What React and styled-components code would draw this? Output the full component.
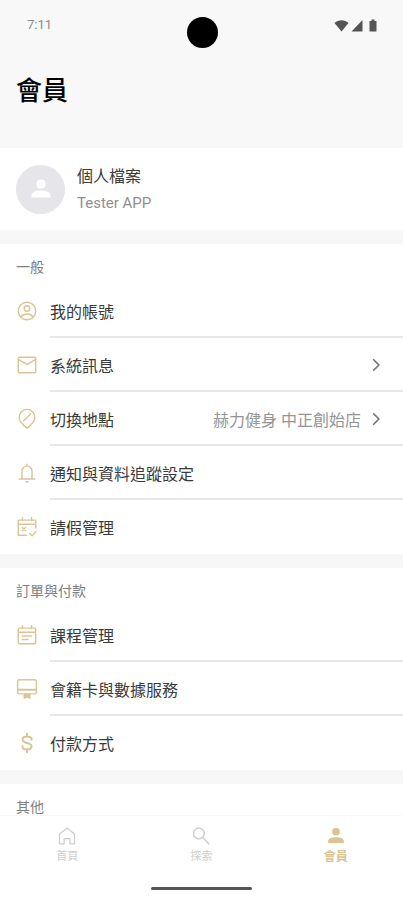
import React from "react";
import styled, { createGlobalStyle } from "styled-components";

const GOLD = "#dac595";

const GlobalStyle = createGlobalStyle`
  *, *::before, *::after { box-sizing: border-box; }
  body {
    margin: 0;
    background: #fff;
    color: #3a3a3a;
    font-family: Roboto, "Noto Sans CJK TC", sans-serif;
  }
  button { font: inherit; color: inherit; border: 0; background: none; padding: 0; margin: 0; }
`;

const Screen = styled.div`
  display: flex;
  flex-direction: column;
  height: 100vh;
  overflow: hidden;
`;

const Header = styled.header`
  flex: none;
  background: #f8f8f8;
  padding-bottom: 39px;
`;

const StatusBar = styled.div`
  display: grid;
  grid-template-columns: 1fr auto 1fr;
  align-items: start;
  padding: 17px 25px 0 27px;
`;

const Clock = styled.span`
  font-size: 13px;
  line-height: 16px;
  color: #8c8c8c;
`;

const Camera = styled.span`
  width: 31px;
  height: 31px;
  border-radius: 50%;
  background: #000;
`;

const StatusIcons = styled.div`
  display: flex;
  justify-content: flex-end;
  align-items: center;
  height: 16px;
  gap: 2px;
  color: #555;
`;

const Title = styled.h1`
  margin: 25px 16px 0;
  font-size: 26px;
  line-height: 36px;
  font-weight: 500;
  color: #000;
`;

const Content = styled.main`
  flex: 1;
  min-height: 0;
  overflow: hidden;
  display: flex;
  flex-direction: column;
  gap: 14px;
  background: #f7f7f7;
`;

const Profile = styled.button`
  flex: none;
  display: flex;
  align-items: center;
  gap: 12px;
  padding: 14px 16px;
  background: #fff;
  text-align: left;
`;

const Avatar = styled.span`
  display: grid;
  place-items: center;
  width: 49px;
  height: 49px;
  border-radius: 50%;
  background: #e5e5ea;
  color: #fff;
`;

const ProfileText = styled.span`
  display: grid;
  padding-top: 2px;
  font-size: 16px;
  line-height: 26px;
`;

const ProfileName = styled.span`
  font-size: 15px;
  color: #909090;
`;

const Section = styled.section`
  flex: none;
  background: #fff;
`;

const SectionTitle = styled.h2`
  margin: 0;
  height: 40px;
  padding: 13px 16px 0;
  font-size: 14px;
  line-height: 20px;
  font-weight: 400;
  color: #808080;
`;

const List = styled.ul`
  list-style: none;
  margin: 0;
  padding: 0;
`;

const Row = styled.button`
  display: flex;
  align-items: center;
  width: 100%;
  height: 54px;
  gap: 12px;
  padding-left: 16px;
  text-align: left;
  font-size: 16px;
`;

const RowBody = styled.span`
  display: flex;
  align-items: center;
  flex: 1;
  height: 54px;
  padding: 2px 20px 0 0;
  border-bottom: 2px solid ${(p) => (p.$divided ? "#e8e8e8" : "transparent")};
`;

const RowLabel = styled.span`
  flex: 1;
  white-space: nowrap;
`;

const RowValue = styled.span`
  margin-right: 8px;
  color: #959595;
  white-space: nowrap;
`;

const TabBar = styled.nav`
  flex: none;
  display: grid;
  grid-template-columns: repeat(3, 1fr);
  background: #fff;
  border-top: 1px solid #f9f9f9;
  padding-top: 10px;
`;

const Tab = styled.button`
  display: flex;
  flex-direction: column;
  align-items: center;
  font-size: ${(p) => (p.$active ? 12 : 11)}px;
  line-height: 18px;
  gap: 2px;
  font-weight: ${(p) => (p.$active ? 700 : 400)};
  color: ${(p) => (p.$active ? GOLD : "#cecece")};
`;

const HomeBar = styled.div`
  flex: none;
  align-self: center;
  width: 101px;
  height: 3px;
  border-radius: 2px;
  margin: 21px 0 10px;
  background: #555;
`;

const Svg = styled.svg`
  flex: none;
  display: block;
  color: ${(p) => p.$tone || "currentColor"};
`;

function Line({ size = 22, tone, width = 1.6, children }) {
  return (
    <Svg $tone={tone} width={size} height={size} viewBox="0 0 24 24" fill="none" stroke="currentColor"
      strokeWidth={width} strokeLinecap="round" strokeLinejoin="round" aria-hidden="true">
      {children}
    </Svg>
  );
}

function Person({ size }) {
  return (
    <Svg width={size} height={size} viewBox="0 0 24 24" fill="currentColor" aria-hidden="true">
      <rect x="7.5" y="2.5" width="9" height="9" rx="4" />
      <path d="M2.5 20.5v-2c0-3.400 4-5 9.500-5s9.500 1.600 9.500 5v2z" />
    </Svg>
  );
}

const ICONS = {
  account: (
    <>
      <circle cx="12" cy="12" r="9.500" />
      <circle cx="12" cy="9.200" r="3" />
      <path d="M5.500 18.500c1.500-2.200 3.800-3.200 6.500-3.200s5 1 6.500 3.200" />
    </>
  ),
  mail: (
    <>
      <rect x="2.500" y="3.500" width="19" height="17" rx="1" />
      <path d="M3.500 6.500l8.500 5.200 8.500-5.200" />
    </>
  ),
  place: (
    <>
      <path d="M12 22C7.500 18.500 3.500 14.800 3.500 10a8.500 8.500 0 0 1 17 0c0 4.800-4 8.500-8.500 12z" />
      <path d="M8.500 14l7.500-7.500" />
    </>
  ),
  bell: (
    <>
      <path d="M3.500 18.500h17M6.500 18.500V10a5.500 5.500 0 0 1 11 0v8.500M12 2.500v2" />
      <path d="M10.800 21.500h2.400" />
    </>
  ),
  leave: (
    <>
      <path d="M21.500 13V4.500h-19V21h9M3 9h18M7 2v3M17 2v3" />
      <path d="M7 12.500l3.500 3.500M10.500 12.500L7 16M15 19l2.500 2.500 4.500-4.500" />
    </>
  ),
  course: (
    <>
      <rect x="2.500" y="4.500" width="19" height="17" rx="1" />
      <path d="M3 9h18M7 2v3M17 2v3M7 13h10M7 17h6" />
    </>
  ),
  card: (
    <>
      <rect x="1.800" y="1.800" width="20.400" height="15.500" rx="1.500" />
      <path d="M2.500 12.800h19" strokeWidth="2.400" />
      <path d="M9 18v4l3-1.500 3 1.500v-4z" fill="currentColor" />
    </>
  ),
  pay: (
    <path
      d="M12 2v3M12 19v3M17 8.500c0-2-2-3.500-5-3.500S7.200 6.500 7.200 8.500c0 4.500 9.800 2.500 9.800 7 0 2-2 3.500-5 3.500s-5-1.500-5-3.500"
      strokeWidth="2.200"
    />
  ),
};

const SECTIONS = [
  {
    title: "一般",
    rows: [
      { icon: "account", label: "我的帳號" },
      { icon: "mail", label: "系統訊息", arrow: true },
      { icon: "place", label: "切換地點", value: "赫力健身 中正創始店", arrow: true },
      { icon: "bell", label: "通知與資料追蹤設定" },
      { icon: "leave", label: "請假管理" },
    ],
  },
  {
    title: "訂單與付款",
    rows: [
      { icon: "course", label: "課程管理" },
      { icon: "card", label: "會籍卡與數據服務" },
      { icon: "pay", label: "付款方式" },
    ],
  },
  { title: "其他", rows: [] },
];

function MenuSection({ title, rows }) {
  return (
    <Section>
      <SectionTitle>{title}</SectionTitle>
      <List>
        {rows.map((row, i) => (
          <li key={row.label}>
            <Row type="button">
              <Line tone={GOLD}>{ICONS[row.icon]}</Line>
              <RowBody $divided={i < rows.length - 1}>
                <RowLabel>{row.label}</RowLabel>
                {row.value && <RowValue>{row.value}</RowValue>}
                {row.arrow && (
                  <Line size={14} width={3} tone="#777">
                    <path d="M8 3l9 9-9 9" />
                  </Line>
                )}
              </RowBody>
            </Row>
          </li>
        ))}
      </List>
    </Section>
  );
}

export default function App() {
  return (
    <Screen>
      <GlobalStyle />
      <Header>
        <StatusBar>
          <Clock>7:11</Clock>
          <Camera />
          <StatusIcons>
            <Svg width="15" height="13" viewBox="0 0 15 13" fill="currentColor" aria-hidden="true">
              <path d="M0.500 4C4.500 0.200 10.500 0.200 14.500 4L7.500 12.500z" />
            </Svg>
            <Svg width="12" height="13" viewBox="0 0 12 13" fill="currentColor" aria-hidden="true">
              <path d="M0.500 12.500L11.500 1v11.500z" />
            </Svg>
            <Svg width="13" height="13" viewBox="0 0 13 13" fill="currentColor" aria-hidden="true">
              <path d="M4.500 2h2V0.500h3V2h2v10.500h-7z" />
            </Svg>
          </StatusIcons>
        </StatusBar>
        <Title>會員</Title>
      </Header>
      <Content>
        <Profile type="button">
          <Avatar>
            <Person size={24} />
          </Avatar>
          <ProfileText>
            個人檔案
            <ProfileName>Tester APP</ProfileName>
          </ProfileText>
        </Profile>
        {SECTIONS.map((section) => (
          <MenuSection key={section.title} {...section} />
        ))}
      </Content>
      <TabBar>
        <Tab type="button">
          <Line size={20} width={1.500}>
            <path d="M3 21.500V9.500l9-7 9 7v12h-5.500V15h-7v6.500z" />
          </Line>
          首頁
        </Tab>
        <Tab type="button">
          <Line size={20} width={1.800}>
            <circle cx="9.500" cy="9" r="6.500" />
            <path d="M14.500 14l7 7.500" />
          </Line>
          探索
        </Tab>
        <Tab type="button" $active aria-current="page">
          <Person size={20} />
          會員
        </Tab>
      </TabBar>
      <HomeBar />
    </Screen>
  );
}
